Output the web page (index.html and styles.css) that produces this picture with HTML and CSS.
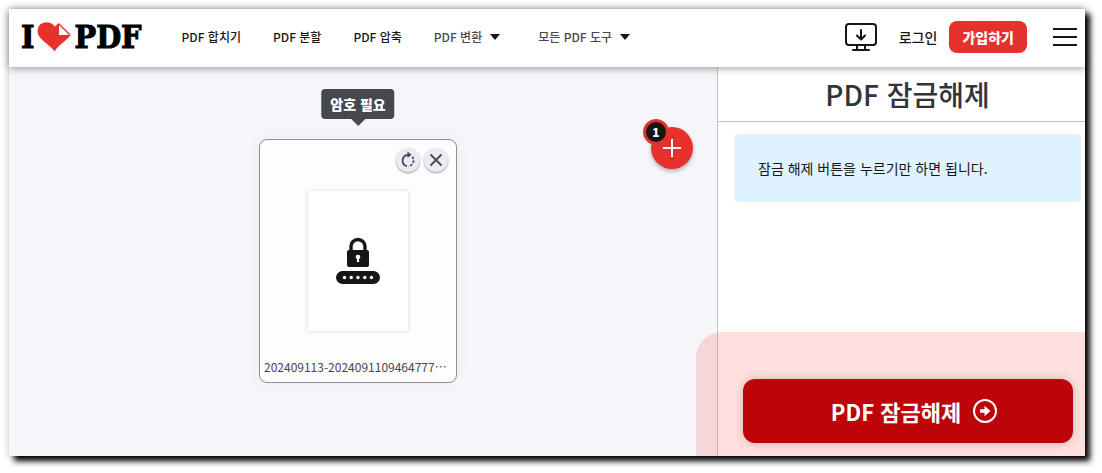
FILE: index.html
```html
<!DOCTYPE html>
<html lang="ko">
  <head>
    <meta charset="UTF-8" />
    <meta name="viewport" content="width=device-width, initial-scale=1" />
    <title>PDF 잠금해제</title>
    <link rel="stylesheet" href="styles.css">
  </head>
  <body>
    <div class="window">
      <header class="header">
        <a class="logo" href="#">
          <span>I</span>
          <svg class="logo-heart" viewBox="0 0 34 30" aria-hidden="true">
            <path d="M17.500 29.500C15 25 8 21 3 15.500C0 12 0 7 2 4C5-.5 12-.8 15.500 2.200L18 4.500L21.500 1L33.500 13C30.500 18 21 23 17.500 29.500Z" fill="#e5322d" />
            <path d="M22 2V13H32.500Z" fill="#fff" />
            <path d="M22 2L33 13" fill="none" stroke="#e5322d" stroke-width="1.200" />
          </svg>
          <span>PDF</span>
        </a>
        <nav class="nav">
          <a href="#">PDF 합치기</a>
          <a href="#">PDF 분할</a>
          <a href="#">PDF 압축</a>
          <a class="nav-drop" href="#">PDF 변환</a>
          <a class="nav-drop" href="#">모든 PDF 도구</a>
        </nav>
        <div class="actions">
          <a class="desktop" href="#" aria-label="데스크톱">
            <svg width="32" height="28" viewBox="0 0 32 28" fill="none" stroke="#161616" stroke-width="2" stroke-linecap="round" stroke-linejoin="round">
              <rect x="1" y="1" width="30" height="21" rx="3" />
              <path d="M12 22.500V26M20 22.500V26M8 27H24M16 7V16M12 12.500L16 16.500L20 12.500" />
            </svg>
          </a>
          <a class="login" href="#">로그인</a>
          <a class="signup" href="#">가입하기</a>
          <button class="menu" type="button" aria-label="메뉴">
            <svg width="24" height="18" viewBox="0 0 24 18" stroke="#161616" stroke-width="2">
              <path d="M0 1H24M0 9H24M0 17H24" />
            </svg>
          </button>
        </div>
      </header>

      <main class="tool">
        <section class="workspace">
          <div class="file">
            <div class="tooltip">암호 필요</div>
            <div class="file-actions">
              <button class="file-btn" type="button" aria-label="회전">
                <svg width="16" height="16" viewBox="0 0 16 16" fill="none" stroke="#47474f" stroke-width="1.800">
                  <path d="M7 14.200A5.800 5.800 0 0 1 8 2.800H9" />
                  <path d="M7.500 -.5L11.500 2.800L7.500 6.100Z" fill="#47474f" stroke="none" />
                  <path d="M12.300 4.800A5.800 5.800 0 0 1 8.500 14.200" stroke-dasharray="2.400 1.600" />
                </svg>
              </button>
              <button class="file-btn" type="button" aria-label="삭제">
                <svg width="12" height="12" viewBox="0 0 12 12" stroke="#47474f" stroke-width="1.800" stroke-linecap="round">
                  <path d="M1 1L11 11M11 1L1 11" />
                </svg>
              </button>
            </div>
            <div class="page">
              <svg width="44" height="46" viewBox="0 0 44 46" aria-hidden="true">
                <path d="M15 13V8.500A7 7 0 0 1 29 8.500V13" fill="none" stroke="#161616" stroke-width="3.400" />
                <rect x="11" y="12" width="22" height="17" rx="2" fill="#161616" />
                <circle cx="22" cy="19" r="2.300" fill="#fff" />
                <path d="M21.200 19H22.800L23.200 24H20.800Z" fill="#fff" />
                <rect y="33" width="44" height="13" rx="6.500" fill="#161616" />
                <g fill="#fff">
                  <circle cx="8.500" cy="39.500" r="1.700" />
                  <circle cx="15.200" cy="39.500" r="1.700" />
                  <circle cx="22" cy="39.500" r="1.700" />
                  <circle cx="28.800" cy="39.500" r="1.700" />
                  <circle cx="35.500" cy="39.500" r="1.700" />
                </g>
              </svg>
            </div>
            <div class="file-name">202409113-2024091109464777…</div>
          </div>

          <button class="add" type="button" aria-label="파일 추가">
            <svg width="18" height="18" viewBox="0 0 18 18" stroke="#fff" stroke-width="2">
              <path d="M9 0V18M0 9H18" />
            </svg>
            <span class="add-count">1</span>
          </button>
        </section>

        <aside class="sidebar">
          <h1>PDF 잠금해제</h1>
          <p class="info">잠금 해제 버튼을 누르기만 하면 됩니다.</p>
          <div class="process">
            <button class="process-btn" type="button">
              PDF 잠금해제
              <svg width="24" height="24" viewBox="0 0 24 24" aria-hidden="true">
                <circle cx="12" cy="12" r="11" fill="none" stroke="#fff" stroke-width="2" />
                <path d="M7 10.300H11.500V6.800L17.500 12L11.500 17.200V13.700H7Z" fill="#fff" />
              </svg>
            </button>
          </div>
        </aside>
      </main>
    </div>
  </body>
</html>
```

FILE: styles.css
```css
* {
  margin: 0;
  padding: 0;
  box-sizing: border-box;
}

body {
  display: flex;
  min-height: 100vh;
  padding: 9px 17px 17px 9px;
  background: #fff;
  color: #161616;
  font-family: "Noto Sans CJK KR", sans-serif;
  font-size: 12px;
  line-height: 20px;
}

a {
  color: inherit;
  text-decoration: none;
}

button {
  border: none;
  background: none;
  color: inherit;
  font: inherit;
  cursor: pointer;
}

svg {
  display: block;
  flex-shrink: 0;
  overflow: visible;
}

.window {
  flex: 1;
  display: flex;
  flex-direction: column;
  min-width: 0;
  box-shadow: 5px 5px 6px #000, 0 0 8px rgba(0, 0, 0, 0.2);
}

/* Header */
.header {
  position: relative;
  z-index: 1;
  display: flex;
  align-items: center;
  height: 58px;
  padding: 0 8px 2px 12px;
  background: #fff;
  box-shadow: 0 1px 8px rgba(0, 0, 0, 0.4);
}

.logo {
  display: flex;
  align-items: center;
  gap: 3px;
  color: #000;
  font-family: "DejaVu Serif Condensed", "DejaVu Serif", serif;
  font-size: 32px;
  font-weight: 700;
  line-height: 32px;
  -webkit-text-stroke: 1px #000;
}

.logo-heart {
  width: 34px;
  height: 30px;
  -webkit-text-stroke: 0;
}

.nav {
  display: flex;
  gap: 32px;
  margin-left: 40px;
  font-weight: 500;
}

.nav-drop {
  display: flex;
  align-items: center;
  gap: 8px;
  color: #47474f;
}

.nav-drop + .nav-drop {
  margin-left: 6px;
}

.nav-drop::after {
  content: "";
  border: 5px solid transparent;
  border-top: 6px solid #161616;
  border-bottom: none;
}

.actions {
  display: flex;
  align-items: center;
  margin-left: auto;
}

.login {
  margin: 0 12px 0 22px;
  font-size: 14px;
  font-weight: 500;
}

.signup {
  padding: 6px 13px;
  border-radius: 8px;
  background: #e5322d;
  color: #fff;
  font-size: 14px;
  font-weight: 900;
}

.menu {
  margin-left: 26px;
}

/* Tool */
.tool {
  flex: 1;
  display: flex;
}

.workspace {
  flex: 1;
  position: relative;
  display: flex;
  justify-content: center;
  align-items: flex-start;
  padding: 72px 10px 0 0;
  background: #f5f5fa;
}

.file {
  position: relative;
  width: 198px;
  padding: 8px 4px 5px;
  border: 1px solid #8f8f9a;
  border-radius: 8px;
  background: #fdfdfd;
  box-shadow: 0 0 16px rgba(0, 0, 0, 0.04);
}

.tooltip {
  position: absolute;
  bottom: 100%;
  left: 50%;
  margin-bottom: 21px;
  padding: 5px 9px;
  border-radius: 4px;
  background: #47474f;
  color: #fff;
  font-size: 14px;
  font-weight: 900;
  white-space: nowrap;
  transform: translateX(-50%);
}

.tooltip::after {
  content: "";
  position: absolute;
  top: 100%;
  left: 50%;
  margin-left: -7px;
  border: 7px solid transparent;
  border-bottom: none;
  border-top-color: #47474f;
}

.file-actions {
  display: flex;
  justify-content: flex-end;
  gap: 4px;
  padding-right: 4px;
}

.file-btn {
  display: flex;
  align-items: center;
  justify-content: center;
  width: 24px;
  height: 24px;
  border-radius: 50%;
  background: #ebebf4;
  box-shadow: 0 1px 2px rgba(0, 0, 0, 0.4);
}

.page {
  display: flex;
  align-items: center;
  justify-content: center;
  width: 100px;
  height: 140px;
  margin: 19px auto 26px;
  background: #fff;
  box-shadow: 0 0 4px rgba(0, 0, 0, 0.16);
}

.file-name {
  overflow: hidden;
  color: #47474f;
  white-space: nowrap;
}

.add {
  position: absolute;
  top: 60px;
  right: 24px;
  display: flex;
  align-items: center;
  justify-content: center;
  width: 42px;
  height: 42px;
  border-radius: 50%;
  background: #e5322d;
  box-shadow: 0 2px 4px rgba(0, 0, 0, 0.3);
}

.add-count {
  position: absolute;
  top: -8px;
  left: -8px;
  width: 26px;
  height: 26px;
  border: 3px solid #e5322d;
  border-radius: 50%;
  background: #161616;
  color: #fff;
  font-weight: 900;
}

/* Sidebar */
.sidebar {
  display: flex;
  flex-direction: column;
  width: 368px;
  border-left: 1px solid #c4c4c8;
  background: #fff;
}

.sidebar h1 {
  padding: 7px 0 7px 12px;
  border-bottom: 1px solid #c4c4c8;
  color: #33333b;
  font-size: 28px;
  font-weight: 500;
  line-height: 40px;
  text-align: center;
}

.info {
  margin: 12px 4px 0 16px;
  padding: 24px;
  border-radius: 4px;
  background: #dff2ff;
  font-size: 14px;
}

.process {
  position: relative;
  margin: auto 0 0 -22px;
  padding: 47px 12px 13px 47px;
  border-top-left-radius: 26px;
  background: rgba(249, 67, 53, 0.17);
}

.process-btn {
  display: flex;
  align-items: center;
  justify-content: center;
  gap: 12px;
  width: 100%;
  height: 64px;
  padding-left: 12px;
  border-radius: 12px;
  background: #bd0509;
  box-shadow: 0 0 8px rgba(0, 0, 0, 0.2);
  color: #fff;
  font-size: 22px;
  font-weight: 700;
}
```
